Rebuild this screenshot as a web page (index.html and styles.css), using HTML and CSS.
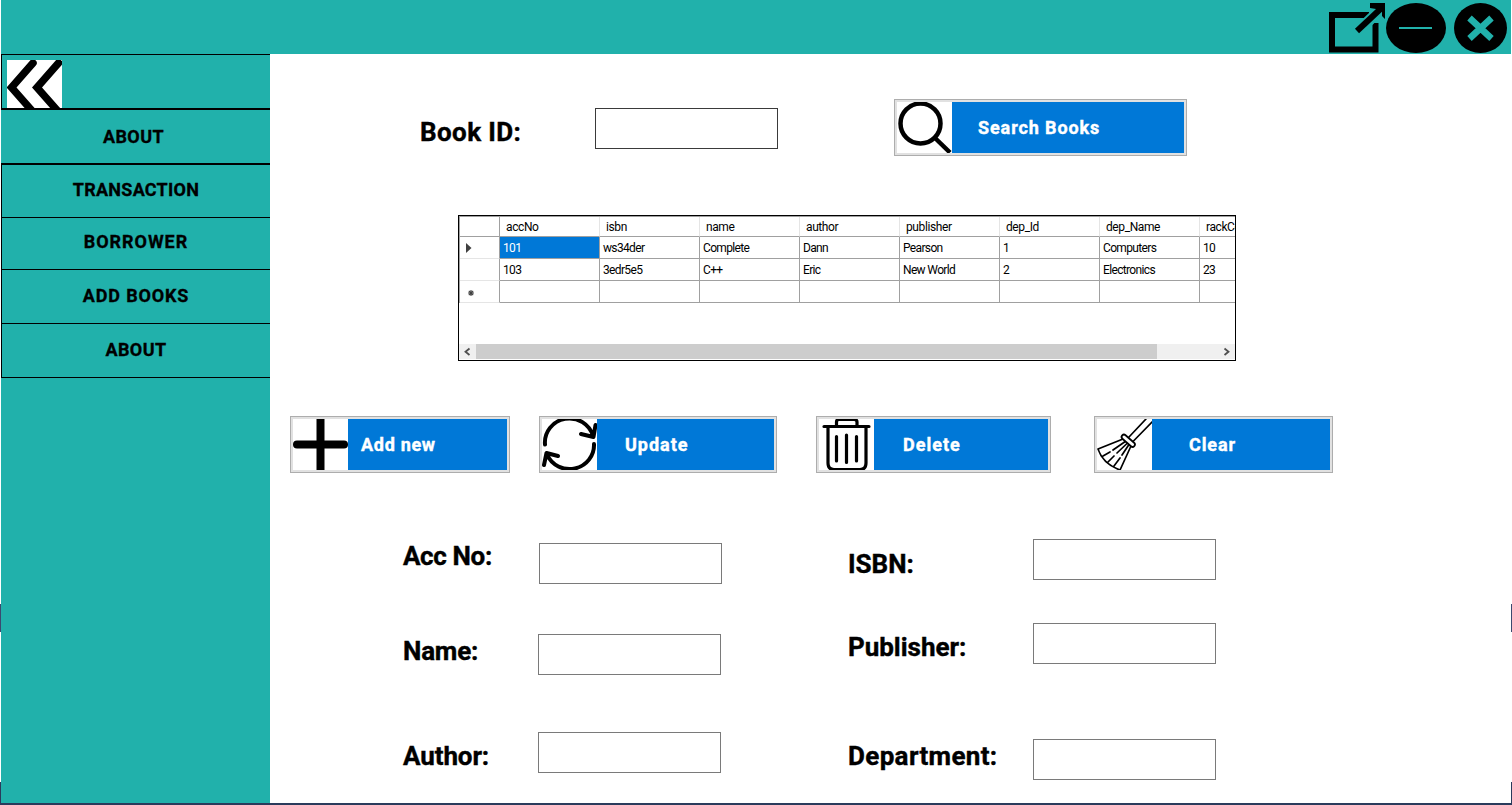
FILE: index.html
```html
<!DOCTYPE html>
<html lang="en">
<head>
<meta charset="utf-8">
<title>Library</title>
<link rel="stylesheet" href="styles.css">
</head>
<body>
<div class="window">
  <header class="titlebar">
    <svg class="win-icon" width="56" height="51" viewBox="0 0 56 51"><path d="M40 12H3V46.500H46.500V20" fill="none" stroke="#000" stroke-width="6"/><path d="M24 33L51 7" stroke="#21b1ab" stroke-width="11"/><path d="M28 28L52 5.500" stroke="#000" stroke-width="6"/><path d="M41 0H56V16L53 13V7L41 5Z"/></svg>
    <svg class="win-icon" width="60" height="51" viewBox="0 0 60 51"><ellipse cx="30" cy="25" rx="30" ry="25"/><path d="M13 25H46" stroke="#21b1ab" stroke-width="2"/></svg>
    <svg class="win-icon close" width="53" height="51" viewBox="0 0 53 51"><ellipse cx="26.500" cy="25" rx="26.500" ry="25"/><path d="M15.500 15L37.500 35.500M37.500 15L15.500 35.500" stroke="#21b1ab" stroke-width="6.500"/></svg>
  </header>
  <div class="body">
    <nav class="sidebar">
      <div class="toggle"><svg width="55" height="48" viewBox="0 0 55 48"><rect width="55" height="48" fill="#fff"/><path d="M26 3L4.500 27.500L27 53M51.500 3L30 27.500L52.500 53" fill="none" stroke="#000" stroke-width="7.500" stroke-linecap="round"/></svg></div>
      <a class="item first"><span class="n-about">ABOUT</span></a>
      <a class="item trans"><span class="n-trans">TRANSACTION</span></a>
      <a class="item borrower"><span class="n-borrow">BORROWER</span></a>
      <a class="item add"><span class="n-add">ADD BOOKS</span></a>
      <a class="item last"><span class="n-about">ABOUT</span></a>
    </nav>
    <main class="content">
      <section class="search">
        <label class="label l-book">Book ID:</label>
        <input class="field dark">
        <button class="btn b-search"><svg width="55" height="51" viewBox="0 0 55 51"><circle cx="23.500" cy="21.500" r="20" fill="none" stroke="#000" stroke-width="4.500"/><path d="M38 36L53 50.500" stroke="#000" stroke-width="4.500"/></svg><span>Search Books</span></button>
      </section>
      <section class="grid">
        <table>
          <thead><tr><th class="rh"></th><th>accNo</th><th>isbn</th><th>name</th><th>author</th><th>publisher</th><th>dep_Id</th><th>dep_Name</th><th>rackCode</th></tr></thead>
          <tbody>
            <tr><td class="rh"><svg width="6" height="10" viewBox="0 0 6 10"><path d="M0 0L5.500 5L0 10Z" fill="#404040"/></svg></td><td class="sel">101</td><td>ws34der</td><td>Complete</td><td>Dann</td><td>Pearson</td><td>1</td><td>Computers</td><td>10</td></tr>
            <tr><td class="rh"></td><td>103</td><td>3edr5e5</td><td>C++</td><td>Eric</td><td>New World</td><td>2</td><td>Electronics</td><td>23</td></tr>
            <tr><td class="rh star"><svg width="6" height="6" viewBox="0 0 6 6"><path d="M3 0V6M0 3H6M.8 .8L5.200 5.200M5.200 .8L.8 5.200" stroke="#404040" stroke-width="1.100"/></svg></td><td></td><td></td><td></td><td></td><td></td><td></td><td></td><td></td></tr>
          </tbody>
        </table>
        <div class="scroll"><svg width="17" height="15" viewBox="0 0 17 15"><path d="M10.500 4.500L6.500 7.700L10.500 11" fill="none" stroke="#505050" stroke-width="1.800"/></svg><div class="thumb"></div><svg class="right" width="17" height="15" viewBox="0 0 17 15"><path d="M6.500 4.500L10.500 7.700L6.500 11" fill="none" stroke="#505050" stroke-width="1.800"/></svg></div>
      </section>
      <section class="actions">
        <button class="btn b-add"><svg width="55" height="51" viewBox="0 0 55 51"><path d="M27.500 0V51" stroke="#000" stroke-width="8"/><path d="M4 25.500H51" stroke="#000" stroke-width="8" stroke-linecap="round"/></svg><span>Add new</span></button>
        <button class="btn b-update"><svg width="55" height="51" viewBox="0 0 55 51"><g fill="none" stroke="#000" stroke-width="4" stroke-linecap="round" stroke-linejoin="round"><path d="M3 25.500A24.500 24 0 0 1 51 17M53.500 6L51.500 18L39 15M52 25A24.500 24 0 0 1 5 35.500M2 46L4.500 34L16 37"/></g></svg><span>Update</span></button>
        <button class="btn b-delete"><svg width="55" height="51" viewBox="0 0 55 51"><g fill="none" stroke="#000" stroke-width="3.200" stroke-linecap="round"><path d="M5 7.500H50M9 8V44Q9 50.500 15 50.500H41Q47 50.500 47 44V8M17.500 7V3Q17.500 .5 20 .5H35Q38 .5 38 3V7M17.500 17.500V42M27.500 16V43.500M37.500 17.500V42"/></g></svg><span>Delete</span></button>
        <button class="btn b-clear"><svg width="55" height="51" viewBox="0 0 55 51"><g fill="none" stroke="#000" stroke-width="1.700" stroke-linecap="round" stroke-linejoin="round"><path d="M26 20L1 30C4 39 12 47 23 51L34 27M32 18L49 0M36.500 22L55 3M29 22L16 31M13 33L6 37M30.500 24L20 34M17 37L11 43M32 25.500L25 36M23 39L17 47"/><path d="M27 18L35.500 25.500" stroke-width="6.500"/><path d="M27 18L35.500 25.500" stroke="#fff" stroke-width="3"/></g></svg><span>Clear</span></button>
      </section>
      <section class="form">
        <div class="column left">
          <div class="row acc"><label class="label l-acc">Acc No:</label><input class="field"></div>
          <div class="row name"><label class="label l-name">Name:</label><input class="field"></div>
          <div class="row author"><label class="label l-author">Author:</label><input class="field"></div>
        </div>
        <div class="column">
          <div class="row isbn"><label class="label l-isbn">ISBN:</label><input class="field"></div>
          <div class="row pub"><label class="label l-pub">Publisher:</label><input class="field"></div>
          <div class="row dep"><label class="label l-dep">Department:</label><input class="field"></div>
        </div>
      </section>
    </main>
  </div>
</div>
</body>
</html>
```
FILE: styles.css
```css
* { box-sizing: border-box; }
body { margin: 0; width: 1512px; height: 805px; overflow: hidden; background: linear-gradient(#fff 604px, #3b4a70 604px 632px, #fff 632px 782px, #2a3b5c 782px); font-family: Roboto, "Liberation Sans", sans-serif; color: #000; }
.window { height: 805px; margin: 0 1px; background: #fff; border-bottom: 2px solid #2a3b5c; display: flex; flex-direction: column; }
.titlebar { height: 54px; flex: none; background: #21b1ab; display: flex; justify-content: flex-end; padding: 3px 4px 0 0; }
.win-icon { display: block; margin-left: 1px; }
.win-icon.close { margin-left: 8px; }
.body { flex: 1; display: flex; min-height: 0; }
.sidebar { width: 269px; flex: none; background: #21b1ab; }
.toggle { height: 56px; border: solid #000; border-width: 1px 0 2px 1px; padding: 5px 0 0 5px; }
.toggle svg { display: block; overflow: hidden; }
.item { display: block; border-bottom: 1px solid #000; border-left: 1px solid #000; height: 54px; text-align: center; font-weight: 700; font-size: 18px; line-height: 22px; padding-top: 15px; white-space: nowrap; -webkit-text-stroke: .3px #000; }
.item.first { height: 55px; border-bottom-width: 2px; border-left: 0; padding: 16px 4px 0 0; }
.item.trans { height: 53px; padding-top: 14px; }
.item.borrower { height: 52px; padding-top: 13px; }
.n-about { letter-spacing: .4px; }
.n-trans { letter-spacing: .25px; }
.n-borrow { letter-spacing: .95px; }
.n-add { letter-spacing: .85px; }
.content { flex: 1; min-width: 0; }
.label { display: block; font-weight: 700; font-size: 26px; line-height: 30px; white-space: nowrap; -webkit-text-stroke: .4px #000; }
.l-book { letter-spacing: .4px; }
.l-acc { letter-spacing: -.35px; }
.l-name { letter-spacing: -.2px; }
.l-author { letter-spacing: -.1px; }
.l-pub { letter-spacing: -.03px; }
.l-dep { letter-spacing: .35px; }
.field { display: block; width: 183px; height: 41px; border: 1px solid #7a7a7a; background: #fff; padding: 0 6px; outline: 0; margin: 0; border-radius: 0; flex: none; }
.field.dark { border-color: #3a3a3a; margin-top: 9px; }
.search { display: flex; align-items: flex-start; padding: 45px 0 0 150px; height: 161px; }
.search .label { width: 175px; padding-top: 18px; }
.btn { flex: none; display: flex; height: 57px; border: 1px solid #adadad; background: #0078d7; box-shadow: inset 0 0 0 2px #e1e1e1; padding: 2px; border-radius: 0; font: 700 18px/51px Roboto, sans-serif; color: #fff; text-align: left; white-space: nowrap; -webkit-text-stroke: .4px #fff; }
.btn svg { display: block; flex: none; background: #fff; -webkit-text-stroke: 0; }
.b-search { width: 293px; margin-left: 116px; letter-spacing: .9px; }
.b-search span { padding-left: 26px; }
.grid { width: 778px; height: 146px; margin-left: 188px; border: 1px solid #000; overflow: hidden; display: flex; flex-direction: column; }
table { border-collapse: separate; border-spacing: 0; table-layout: fixed; width: 841px; border-top: 1px solid #a0a0a0; border-left: 1px solid #a0a0a0; font-size: 12px; letter-spacing: -.65px; }
th, td { width: 100px; height: 22px; padding: 0 0 0 3px; text-align: left; font-weight: 400; border: solid #a0a0a0; border-width: 0 1px 1px 0; line-height: 20px; white-space: nowrap; }
th { height: 20px; line-height: 18px; padding: 1px 0 0 6px; border-right-color: #e5e5e5; letter-spacing: -.4px; }
th.rh { width: 40px; border-right-color: #a0a0a0; }
td.rh { border-bottom-color: #e5e5e5; padding-left: 6px; }
td.rh svg { display: block; }
td.star { padding: 3px 0 0 8px; }
.sel { background: #0078d7; color: #fff; }
.scroll { margin-top: auto; margin-bottom: 1px; height: 15px; background: #f0f0f0; display: flex; }
.thumb { width: 681px; background: #cdcdcd; }
.scroll .right { margin-left: auto; }
.actions { display: flex; padding: 55px 0 0 20px; height: 178px; }
.b-add { width: 220px; letter-spacing: .7px; }
.b-add span { padding-left: 13px; }
.b-update { width: 238px; margin-left: 29px; letter-spacing: 1px; }
.b-update span { padding-left: 28px; }
.b-delete { width: 235px; margin-left: 39px; letter-spacing: 1px; }
.b-delete span { padding-left: 29px; }
.b-clear { width: 239px; margin-left: 43px; letter-spacing: .9px; }
.b-clear span { padding-left: 37px; }
.form { display: flex; padding-left: 133px; }
.column { width: 445px; }
.row { display: flex; align-items: flex-start; }
.row .label { width: 185px; }
.left .label { width: 135px; }
.acc { padding-top: 4px; }
.left .acc .label { width: 136px; margin-top: -2px; }
.name { margin-top: 50px; }
.name .label { margin-top: 2px; }
.author { margin-top: 57px; }
.author .label { margin-top: 9px; }
.isbn .label { margin-top: 10px; }
.pub { margin-top: 43px; }
.pub .label { margin-top: 9px; }
.dep { margin-top: 75px; }
.dep .label { margin-top: 2px; }
```
